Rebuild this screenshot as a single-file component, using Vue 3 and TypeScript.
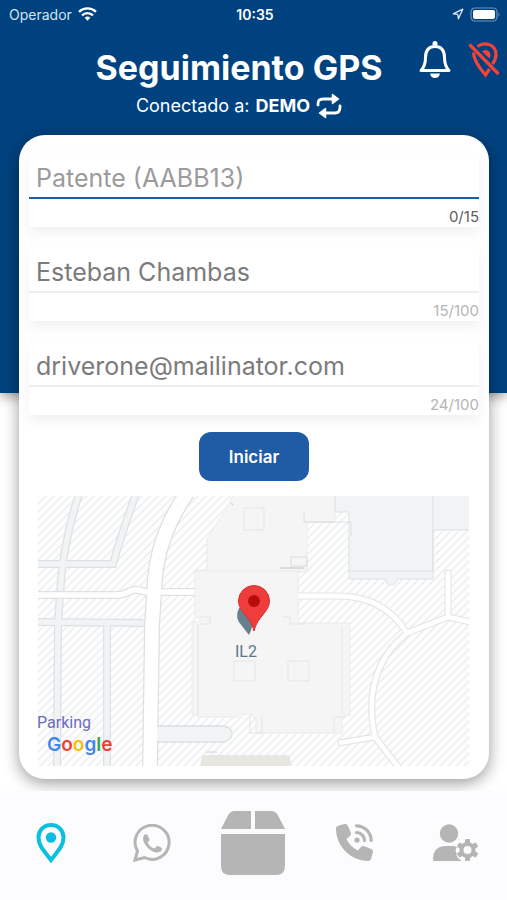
<script setup lang="ts">
import { reactive, ref } from 'vue'

interface Field {
  id: string
  label: string
  type: string
  value: string
  max: number
}

const fields = reactive<Field[]>([
  { id: 'plate', label: 'Patente (AABB13)', type: 'text', value: '', max: 15 },
  { id: 'name', label: 'Nombre', type: 'text', value: 'Esteban Chambas', max: 100 },
  { id: 'email', label: 'Correo', type: 'email', value: 'driverone@mailinator.com', max: 100 },
])

const active = ref('plate')
const tracking = ref(false)
const gearTeeth = [0, 60, 120, 180, 240, 300]
</script>

<template>
  <div class="app">
    <header class="top">
      <div class="status">
        <span class="carrier">
          Operador
          <svg width="19" height="14" viewBox="0 0 19 14" aria-hidden="true">
            <g fill="none" stroke="#fff" stroke-width="2.3">
              <path d="M1 4.8C5.800 .3 13.200 .3 18 4.800" />
              <path d="M4 8.300C7.100 5.300 11.900 5.300 15 8.300" />
            </g>
            <path d="M9.500 13.700L6.600 10.800Q9.500 8.400 12.400 10.800Z" fill="#fff" />
          </svg>
        </span>
        <span class="clock">10:35</span>
        <span class="battery">
          <svg width="12" height="12" viewBox="0 0 12 12" aria-hidden="true">
            <path d="M1.200 5.800L10.800 1.200L6.400 10.800L5.800 6.300Z" fill="none" stroke="#dbe6f2" stroke-width="1.300" stroke-linejoin="round" />
          </svg>
          <svg width="31" height="15" viewBox="0 0 31 15" aria-hidden="true">
            <rect x="1" y="1" width="26" height="13" rx="4" fill="none" stroke="#6f94bb" stroke-width="1.200" />
            <rect x="3" y="3" width="22" height="9" rx="2" fill="#fff" />
            <path d="M28.500 5.200Q30.500 7.500 28.500 9.800Z" fill="#6f94bb" />
          </svg>
        </span>
      </div>

      <div class="heading">
        <div class="titles">
          <h1>Seguimiento GPS</h1>
          <p>
            Conectado a: <strong>DEMO</strong>
            <button class="plain" type="button" aria-label="Cambiar">
              <svg width="26" height="26" viewBox="0 0 26 26">
                <g fill="none" stroke="#fff" stroke-width="2.800" stroke-linecap="round">
                  <path d="M2 12V11Q2 6 7 6H18" />
                  <path d="M24 13V14Q24 20 19 20H8" />
                </g>
                <path d="M16.500 1.500L22.500 6L16.500 10.500ZM9.500 15.500L3.500 20L9.500 24.500Z" fill="#fff" stroke="#fff" stroke-width="1.500" stroke-linejoin="round" />
              </svg>
            </button>
          </p>
        </div>
        <div class="actions">
          <button class="plain" type="button" aria-label="Notificaciones">
            <svg width="34" height="40" viewBox="0 0 34 40">
              <path d="M3 30.500Q7.500 26 7.500 17.500Q7.500 6.500 17 6.500Q26.500 6.500 26.500 17.500Q26.500 26 31 30.500Z" fill="none" stroke="#fff" stroke-width="3" stroke-linejoin="round" />
              <path d="M14.500 5V3.500a2.500 2.500 0 0 1 5 0V5ZM12 33.500H22Q21 38 17 38Q13 38 12 33.500Z" fill="#fff" />
            </svg>
          </button>
          <button class="plain" type="button" aria-label="Ubicación desactivada">
            <svg width="32" height="40" viewBox="0 0 32 40">
              <g fill="none" stroke="#f0443a" stroke-width="3.300">
                <path d="M1.500 4.500L30.500 34" />
                <path d="M9.500 6.500Q15 2.500 21 4.500Q28 7 28 14.500Q28 19 24.500 24" />
                <path d="M5.500 12.500Q5.500 21 17.500 35L21.500 29" />
              </g>
              <path d="M14 11.500Q18.500 8.500 21.500 12Q23.500 15 21.500 18.500Z" fill="#f0443a" />
            </svg>
          </button>
        </div>
      </div>
    </header>

    <main class="card">
      <form @submit.prevent="tracking = !tracking">
        <div class="fields">
          <div v-for="field in fields" :key="field.id" class="field" :class="{ active: active === field.id }">
            <input
              :id="field.id"
              v-model="field.value"
              :type="field.type"
              :aria-label="field.label"
              :placeholder="field.label"
              :maxlength="field.max"
              @focus="active = field.id"
            />
            <span class="counter">{{ field.value.length }}/{{ field.max }}</span>
          </div>
        </div>
        <button class="start" type="submit">Iniciar</button>
      </form>

      <svg class="map" viewBox="0 0 431 270" preserveAspectRatio="xMidYMid slice" role="img" aria-label="Mapa">
        <defs>
          <pattern id="hatch" width="8" height="8" patternUnits="userSpaceOnUse">
            <rect width="8" height="8" fill="#fdfdfd" />
            <path d="M-2 2L2 -2M0 8L8 0M6 10L10 6" stroke="#eceff0" stroke-width="1.500" />
          </pattern>
        </defs>
        <rect width="431" height="270" fill="url(#hatch)" />

        <g fill="none" stroke="#dde1e4" stroke-width="8">
          <path d="M41 -2Q24 50 22 99L20 126L19 272" />
          <path d="M98 -2Q84 36 75 68H-2" />
          <path d="M-2 126L110 127M69 129V272" />
        </g>
        <g fill="none" stroke="#f1f3f4" stroke-width="5.500">
          <path d="M41 -2Q24 50 22 99L20 126L19 272" />
          <path d="M98 -2Q84 36 75 68H-2" />
          <path d="M-2 126L110 127M69 127V272" />
        </g>

        <g fill="none" stroke="#dfe2e4" stroke-width="8">
          <path d="M-2 99H80Q88 98 92 95Q97 92 108 96H158" />
        </g>
        <path d="M149 -3Q121 38 117 82L114 130L112 272" fill="none" stroke="#dce0e2" stroke-width="16" />
        <path d="M-2 99H80Q88 98 92 95Q97 92 108 96H158" fill="none" stroke="#fff" stroke-width="5.500" />
        <path d="M149 -3Q121 38 117 82L114 130L112 272" fill="none" stroke="#fff" stroke-width="13.500" />
        <path d="M119 230H186Q194 232 194 238Q194 244 186 246H119" fill="#f1f3f4" stroke="#dce0e2" stroke-width="1.300" />

        <g stroke="#ebebeb" fill="#f5f5f5">
          <path d="M195 -1L186 17L173 36L169 44V74H157V121H162V126H154V219H160V221H200V218H215V222H218V237H304V221L312 219V127H260V76H269V26H297V-1Z" />
          <path d="M157 75H262" fill="none" />
          <path d="M206 12H226V34H206ZM196 165H217V185H196ZM250 165H271V185H250ZM212 218V237H224V221M296 237V221H304M162 121H172V128H162M160 128V221M304 130V218M244 121H252V128H268" fill="none" stroke="#e5e5e5" />
          <path d="M266 16V26H297M253 70H269V61H253Z" fill="none" stroke="#dadada" />
        </g>
        <path d="M193 7l2 2M242 72h24" fill="none" stroke="#d2d2d2" stroke-width="1.500" />

        <path d="M297 -1V16H311V83H348Q348 89 353 89Q358 89 359 83H395V34H432V-1Z" fill="#f1f3f5" stroke="#dde1e4" />
        <path d="M311 75H395V0M297 26H313V40" fill="none" stroke="#dde1e4" />

        <g fill="none" stroke="#e3e5e5" stroke-width="7">
          <path d="M260 100H300Q346 100 369 137L410 121L432 126M410 74V121" />
          <path d="M369 137Q323 174 337 241L361 272M337 241L300 247" />
        </g>
        <g fill="none" stroke="#fff" stroke-width="4.800">
          <path d="M260 100H300Q346 100 369 137L410 121L432 126M410 75V121" />
          <path d="M369 137Q323 174 337 241L361 272M337 241L301 247" />
        </g>

        <path d="M164 259H251L254 271H162ZM168 255h11v2h-11Z" fill="#e8e6e0" />

        <path d="M201 112Q196 122 204 130L211 139Q216 130 216 112Z" fill="#687f8e" />
        <path d="M216 89.500A15.500 15.500 0 0 1 231.500 105C231.500 116 219 121 216 135C213 121 200.500 116 200.500 105A15.500 15.500 0 0 1 216 89.500Z" fill="#ee3d3b" stroke="#d9302c" />
        <circle cx="216" cy="105" r="6" fill="#b90d0d" />

        <text x="208" y="161" text-anchor="middle" class="place">IL2</text>
        <text x="-1" y="232" class="parking">Parking</text>
        <text x="9" y="255" class="google"><tspan fill="#4285f4">G</tspan><tspan fill="#ea4335">o</tspan><tspan fill="#fbbc05">o</tspan><tspan fill="#4285f4">g</tspan><tspan fill="#34a853">l</tspan><tspan fill="#ea4335">e</tspan></text>
      </svg>
    </main>

    <nav class="tabs" aria-label="Principal">
      <a href="#mapa" class="current" aria-label="Mapa">
        <svg width="32" height="42" viewBox="0 0 32 42">
          <path d="M16 3C8.500 3 3.500 8.500 3.500 15.500C3.500 24 10 30 16 38C22 30 28.500 24 28.500 15.500C28.500 8.500 23.500 3 16 3Z" fill="none" stroke="currentColor" stroke-width="4" />
          <circle cx="16" cy="15.500" r="5.200" fill="currentColor" />
        </svg>
      </a>
      <a href="#whatsapp" aria-label="WhatsApp">
        <svg width="38" height="38" viewBox="0 0 38 38">
          <path d="M2 36L4.500 27A17 17 0 1 1 11.500 33.500Z" fill="none" stroke="currentColor" stroke-width="3" />
          <path d="M11 11Q12.500 9.500 14.500 11L16.500 15.500Q16.500 17 14.500 18.500Q17 23.500 21.500 24.500L24 22Q25 21.500 29 24Q29 28 24.500 28.500Q20 29 14.500 23.500Q8 16.500 11 11Z" fill="currentColor" />
        </svg>
      </a>
      <a href="#paquetes" aria-label="Paquetes">
        <svg width="64" height="64" viewBox="0 0 64 64" fill="currentColor">
          <path d="M30 0V18H0L7.500 3.500Q9.500 0 13.500 0ZM34 0H50.500Q54.500 0 56.500 3.500L64 18H34ZM0 23H64V55Q64 64 55 64H9Q0 64 0 55Z" />
        </svg>
      </a>
      <a href="#llamar" aria-label="Llamar">
        <svg width="37" height="37" viewBox="0 0 37 37">
          <path transform="scale(.0722)" d="M164.900 24.600c-7.700-18.600-28-28.500-47.400-23.200l-88 24C12.100 30.200 0 46 0 64C0 311.400 200.600 512 448 512c18 0 33.800-12.100 38.600-29.500l24-88c5.300-19.400-4.600-39.700-23.200-47.400l-96-40c-16.300-6.800-35.200-2.100-46.300 11.600L304.700 368C234.300 334.700 177.300 277.700 144 207.300L193.300 167c13.700-11.200 18.400-30 11.600-46.300l-40-96z" fill="currentColor" />
          <circle cx="21" cy="16" r="2.600" fill="currentColor" />
          <path d="M20.500 8.500A8 8 0 0 1 28.500 16.500M20.500 1.800A15 15 0 0 1 35.200 16.500" fill="none" stroke="currentColor" stroke-width="3.200" stroke-linecap="round" />
        </svg>
      </a>
      <a href="#cuenta" aria-label="Cuenta">
        <svg width="46" height="38" viewBox="0 0 46 38" fill="currentColor">
          <circle cx="16" cy="9.500" r="9.200" />
          <path d="M0 35.500Q0 22 13 22H19Q22 22 24 23Q21.500 26 23.500 29.500Q23 33.500 29 37H1.500Q0 37 0 35.500Z" />
          <g transform="translate(34.500 26)">
            <circle r="6" fill="none" stroke="currentColor" stroke-width="4" />
            <rect v-for="angle in gearTeeth" :key="angle" x="-2.500" y="-11" width="5" height="5" rx="1" :transform="`rotate(${angle})`" />
          </g>
        </svg>
      </a>
    </nav>
  </div>
</template>

<style>
body {
  background: #fff;
}
</style>

<style scoped>
* {
  box-sizing: border-box;
}

.app {
  display: flex;
  flex-direction: column;
  min-height: 100vh;
  font-family: Inter, "Liberation Sans", sans-serif;
  background: #fff;
}

.top {
  padding-bottom: 270px;
  color: #fff;
  background: #00427f;
  box-shadow: 0 3px 12px rgba(0, 0, 0, 0.4);
}

.status {
  display: grid;
  grid-template-columns: 1fr auto 1fr;
  align-items: center;
  height: 28px;
  padding: 0 6px 0 9px;
  font-size: 14px;
}

.carrier,
.battery {
  display: flex;
  align-items: center;
  gap: 6px;
  color: #d5e2ef;
}

.battery {
  justify-content: flex-end;
}

.clock {
  font-weight: 600;
}

.heading {
  display: flex;
  align-items: flex-start;
  gap: 8px;
  padding: 12px 7px 0 68px;
}

.titles {
  flex: 1;
  padding-top: 8px;
  text-align: center;
  white-space: nowrap;
}

h1 {
  margin: 0;
  font-size: 34px;
  font-weight: 700;
  line-height: 40px;
}

p {
  display: flex;
  align-items: center;
  justify-content: center;
  gap: 6px;
  height: 35px;
  margin: 0;
  font-size: 18px;
}

strong {
  font-weight: 700;
}

.actions {
  display: flex;
  gap: 16px;
}

.plain {
  display: flex;
  padding: 0;
  border: 0;
  background: none;
}

.card {
  position: relative;
  margin: -258px 18px 12px 19px;
  padding: 18px 10px 13px;
  border-radius: 26px;
  background: #fff;
  box-shadow: 0 4px 16px rgba(0, 0, 0, 0.4);
}

form {
  display: flex;
  flex-direction: column;
  gap: 17px;
}

.fields {
  display: flex;
  flex-direction: column;
  gap: 20px;
}

.field {
  display: flex;
  flex-direction: column;
  height: 74px;
  background: #fff;
  box-shadow: 0 6px 12px rgba(0, 0, 0, 0.06);
}

.field input {
  width: 100%;
  height: 46px;
  padding: 6px 7px 0;
  border: 0;
  border-bottom: 2px solid #eee;
  border-radius: 0;
  outline: 0;
  background: none;
  color: #7b7b7b;
  font: 400 25px/36px Inter, "Liberation Sans", sans-serif;
}

.field.active input {
  border-bottom-color: #1f5ca5;
}

.field input::placeholder {
  color: #9b9b9b;
  opacity: 1;
}

.counter {
  align-self: flex-end;
  padding-top: 8px;
  color: #b5b5b5;
  font-size: 15px;
  line-height: 20px;
}

.active .counter {
  color: #606060;
}

.start {
  align-self: center;
  width: 110px;
  height: 49px;
  border: 0;
  border-radius: 12px;
  background: #1f5ca5;
  color: #fff;
  font: 600 17px/24px Inter, "Liberation Sans", sans-serif;
}

.map {
  display: block;
  width: calc(100% - 19px);
  margin: 15px 10px 0 9px;
}

.place {
  fill: #5b7886;
  font: 400 16px Roboto, sans-serif;
}

.parking {
  fill: #6b6bc0;
  font: 400 16px Roboto, sans-serif;
}

.google {
  font: 600 19px Inter, sans-serif;
}

.tabs {
  position: relative;
  display: grid;
  grid-template-columns: repeat(5, 1fr);
  flex: 1;
  align-items: center;
  justify-items: center;
  min-height: 108px;
  padding-bottom: 6px;
  background: #fcfcfe;
}

.tabs a {
  display: flex;
  color: #b5b5b5;
}

.tabs .current {
  color: #0bbfe0;
}
</style>
